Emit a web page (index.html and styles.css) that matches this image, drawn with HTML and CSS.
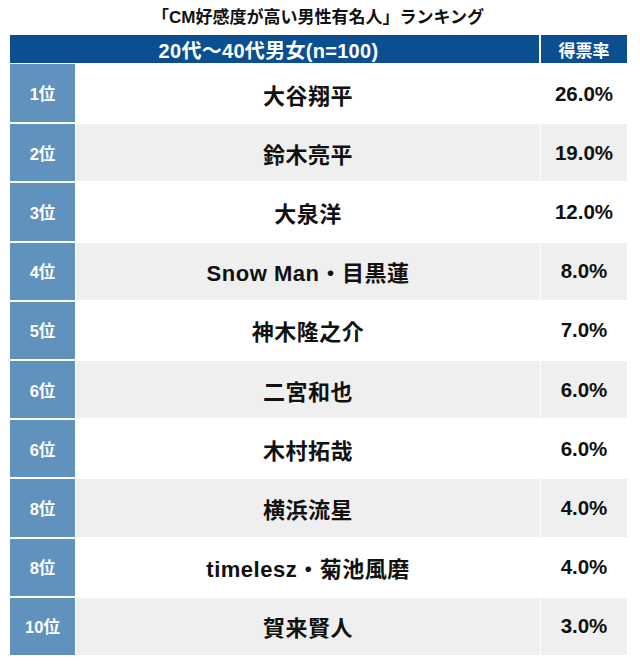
FILE: index.html
```html
<!DOCTYPE html>
<html lang="ja">
<head>
<meta charset="utf-8">
<link rel="stylesheet" href="styles.css">
</head>
<body>
<div class="page">
  <h1 class="title">「CM好感度が高い男性有名人」ランキング</h1>
  <div class="table">
    <div class="head head-main">20代〜40代男女(n=100)</div>
    <div class="head head-pct">得票率</div>

    <div class="rank">1位</div><div class="name">大谷翔平</div><div class="pct">26.0%</div>
    <div class="rank">2位</div><div class="name alt">鈴木亮平</div><div class="pct alt">19.0%</div>
    <div class="rank">3位</div><div class="name">大泉洋</div><div class="pct">12.0%</div>
    <div class="rank">4位</div><div class="name alt">Snow Man・目黒蓮</div><div class="pct alt">8.0%</div>
    <div class="rank">5位</div><div class="name">神木隆之介</div><div class="pct">7.0%</div>
    <div class="rank">6位</div><div class="name alt">二宮和也</div><div class="pct alt">6.0%</div>
    <div class="rank">6位</div><div class="name">木村拓哉</div><div class="pct">6.0%</div>
    <div class="rank">8位</div><div class="name alt">横浜流星</div><div class="pct alt">4.0%</div>
    <div class="rank">8位</div><div class="name">timelesz・菊池風磨</div><div class="pct">4.0%</div>
    <div class="rank">10位</div><div class="name alt">賀来賢人</div><div class="pct alt">3.0%</div>
  </div>
</div>
</body>
</html>
```

FILE: styles.css
```css
html, body {
  margin: 0;
  padding: 0;
  background: #ffffff;
}

body {
  font-family: "Liberation Sans", "Noto Sans CJK JP", sans-serif;
  font-weight: 700;
  color: #111111;
}

.page {
  width: 640px;
  height: 670px;
}

.title {
  margin: 0;
  height: 35px;
  line-height: 36px;
  font-size: 17px;
  font-weight: 700;
  text-align: center;
  padding-right: 4px;
}

.table {
  margin-left: 10px;
  width: 617px;
  display: grid;
  grid-template-columns: 65px 1fr 86px;
  grid-template-rows: 28px repeat(10, 57.2px);
  column-gap: 1px;
  row-gap: 2px;
}

.head {
  background: #0c4f90;
  color: #ffffff;
  display: flex;
  align-items: center;
  justify-content: center;
}

.head-main {
  grid-column: 1 / 3;
  font-size: 20px;
  letter-spacing: 0.3px;
  padding-right: 12px;
  margin-right: 1px;
}

.head-pct {
  font-size: 17px;
}

.rank {
  background: #6092bd;
  color: #ffffff;
  font-size: 16.5px;
  display: flex;
  align-items: center;
  justify-content: center;
}

.name {
  background: #ffffff;
  font-size: 22px;
  letter-spacing: 0.5px;
  display: flex;
  align-items: center;
  justify-content: center;
}

.pct {
  background: #ffffff;
  font-size: 20.5px;
  display: flex;
  align-items: center;
  justify-content: center;
}

.alt {
  background: #efefef;
}

.table > div:nth-child(3) {
  margin-top: -1px;
}
```
